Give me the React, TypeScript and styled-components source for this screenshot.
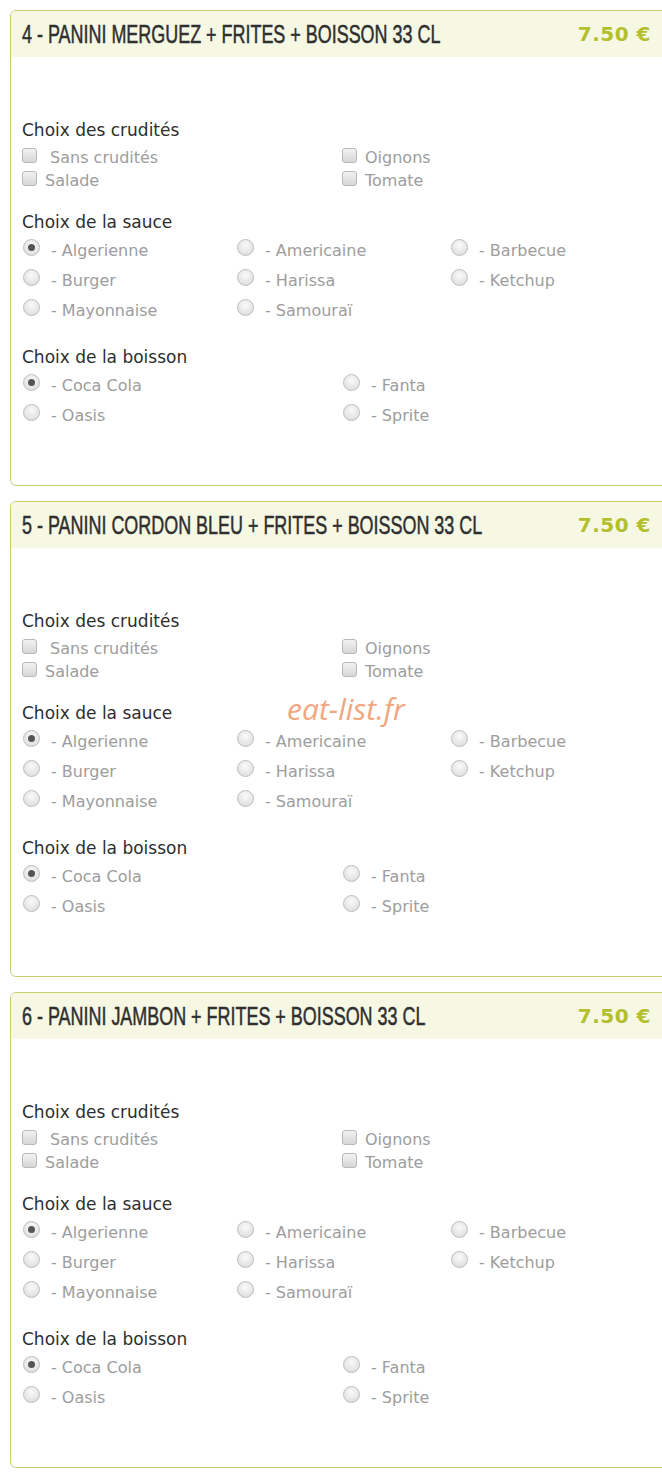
import styled, { createGlobalStyle } from 'styled-components'

const GlobalStyle = createGlobalStyle`
  html, body {
    margin: 0;
    padding: 0;
    background: #fff;
    overflow-x: hidden;
  }
  body {
    font-family: "DejaVu Sans", sans-serif;
  }
`

const Page = styled.div`
  position: relative;
  width: 662px;
  padding: 10px 0 1px 10px;
  box-sizing: border-box;
  overflow: hidden;
`

const Card = styled.section`
  width: 670px;
  height: 476px;
  box-sizing: border-box;
  border: 1px solid #c9cd72;
  border-radius: 6px;
  margin-bottom: 15px;
  overflow: hidden;
  background: #fff;
`

const Header = styled.header`
  height: 46px;
  background: #f6f8e4;
  display: flex;
  align-items: center;
  padding: 0 28px 0 11px;
`

const Title = styled.h2`
  flex: 1;
  min-width: 0;
  margin: 0;
  font-family: "Liberation Sans", sans-serif;
  font-weight: normal;
  font-size: 26px;
  color: #2f2f2f;
  -webkit-text-stroke: 0.5px #2f2f2f;
  transform: scaleX(0.69);
  transform-origin: left center;
  white-space: nowrap;
`

const Price = styled.span`
  flex-shrink: 0;
  white-space: nowrap;
  font-family: "DejaVu Sans", sans-serif;
  font-weight: bold;
  font-size: 20px;
  color: #b3c02c;
  letter-spacing: 0.5px;
`

const Body = styled.div`
  padding: 63px 0 0 11px;
`

const Section = styled.div<{ $mb: number }>`
  margin-bottom: ${p => p.$mb}px;
`

const SectionTitle = styled.h3<{ $mb: number }>`
  margin: 0 0 ${p => p.$mb}px;
  font-size: 17px;
  line-height: 20px;
  font-weight: normal;
  color: #2e2e2e;
`

const Grid = styled.div<{ $cols: number; $rowH: number }>`
  display: grid;
  grid-template-columns: repeat(${p => p.$cols}, ${p => (p.$cols === 3 ? 214 : 320)}px);
  grid-auto-rows: ${p => p.$rowH}px;
`

const Option = styled.label<{ $gap: number }>`
  display: flex;
  align-items: center;
  gap: ${p => p.$gap}px;
  font-size: 16px;
  color: #9d9d9d;
  white-space: nowrap;
`

const Box = styled.span`
  width: 13px;
  height: 13px;
  margin-top: -5px;
  border: 1px solid #b9b9b9;
  border-radius: 3px;
  background: linear-gradient(#f2f2f2, #d6d6d6);
  flex-shrink: 0;
`

const Radio = styled.span<{ $on?: boolean }>`
  position: relative;
  width: 15px;
  height: 15px;
  margin-top: -6px;
  margin-left: 1px;
  border: 1px solid #bdbdbd;
  border-radius: 50%;
  background: radial-gradient(circle at 50% 35%, #fafafa, #d8d8d8);
  flex-shrink: 0;
  &::after {
    content: '';
    display: ${p => (p.$on ? 'block' : 'none')};
    position: absolute;
    left: 4px;
    top: 4px;
    width: 7px;
    height: 7px;
    border-radius: 50%;
    background: #555;
  }
`

const Watermark = styled.div`
  position: absolute;
  left: 287px;
  top: 688px;
  font-family: "Open Sans", sans-serif;
  font-style: italic;
  font-size: 30px;
  color: #f2a680;
  pointer-events: none;
`

const crudites = ['\u00a0Sans crudités', 'Oignons', 'Salade', 'Tomate']
const sauces = ['Algerienne', 'Americaine', 'Barbecue', 'Burger', 'Harissa', 'Ketchup', 'Mayonnaise', 'Samouraï']
const boissons = ['Coca Cola', 'Fanta', 'Oasis', 'Sprite']

const menus = [
  '4 - PANINI MERGUEZ + FRITES + BOISSON 33 CL',
  '5 - PANINI CORDON BLEU + FRITES + BOISSON 33 CL',
  '6 - PANINI JAMBON + FRITES + BOISSON 33 CL',
]

function MenuCard({ title }: { title: string }) {
  return (
    <Card>
      <Header>
        <Title>{title}</Title>
        <Price>7.50 €</Price>
      </Header>
      <Body>
        <Section $mb={20}>
          <SectionTitle $mb={6}>Choix des crudités</SectionTitle>
          <Grid $cols={2} $rowH={23}>
            {crudites.map(c => (
              <Option key={c} $gap={8}>
                <Box />
                {c}
              </Option>
            ))}
          </Grid>
        </Section>
        <Section $mb={22}>
          <SectionTitle $mb={3}>Choix de la sauce</SectionTitle>
          <Grid $cols={3} $rowH={30}>
            {sauces.map((s, i) => (
              <Option key={s} $gap={11}>
                <Radio $on={i === 0} />- {s}
              </Option>
            ))}
          </Grid>
        </Section>
        <Section $mb={0}>
          <SectionTitle $mb={3}>Choix de la boisson</SectionTitle>
          <Grid $cols={2} $rowH={30}>
            {boissons.map((b, i) => (
              <Option key={b} $gap={11}>
                <Radio $on={i === 0} />- {b}
              </Option>
            ))}
          </Grid>
        </Section>
      </Body>
    </Card>
  )
}

export default function App() {
  return (
    <>
      <GlobalStyle />
      <Page>
        {menus.map(m => (
          <MenuCard key={m} title={m} />
        ))}
        <Watermark>eat-list.fr</Watermark>
      </Page>
    </>
  )
}
